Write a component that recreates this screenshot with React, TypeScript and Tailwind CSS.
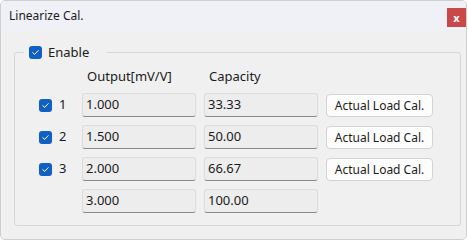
import React from "react";

function Check() {
  return (
    <span className="flex h-[13px] w-[13px] shrink-0 items-center justify-center rounded-[3px] bg-[#0f5fc4]">
      <svg width="9" height="9" viewBox="0 0 9 9" fill="none">
        <path d="M1.8 4.7 L3.6 6.4 L7.2 2.6" stroke="white" strokeWidth="1" strokeLinecap="round" strokeLinejoin="round" />
      </svg>
    </span>
  );
}

function Box({ v }: { v: string }) {
  return (
    <div className="flex h-[24px] w-[114px] items-center rounded-[3px] border border-[#dcdcdc] border-b-[#8a8a8a] bg-[#ededed] pl-[3px] text-[13px] text-[#1b1b1b]">
      {v}
    </div>
  );
}

function Btn() {
  return (
    <div className="ml-[8px] mt-[1px] flex h-[23px] w-[107px] items-center justify-center rounded-[4px] border border-[#d3d3d3] bg-[#fdfdfd] text-[12px] text-[#1b1b1b]">
      Actual Load Cal.
    </div>
  );
}

const rows = [
  { n: "1", o: "1.000", c: "33.33", b: true },
  { n: "2", o: "1.500", c: "50.00", b: true },
  { n: "3", o: "2.000", c: "66.67", b: true },
  { n: "", o: "3.000", c: "100.00", b: false },
];

export default function App() {
  return (
    <div
      className="flex h-[240px] w-[467px] flex-col overflow-hidden rounded-[5px] border border-[#cfcfcf] bg-[#f0f0f0] text-[#1b1b1b]"
      style={{ fontFamily: '"Noto Sans", "Noto Sans CJK JP", sans-serif' }}
    >
      <div className="flex h-[30px] shrink-0 items-start justify-between bg-[#eff1f6] pl-[8px]">
        <span className="mt-[6px] text-[12px] leading-[18px]">Linearize Cal.</span>
        <div className="mt-[7px] flex h-[19px] w-[19px] items-center justify-center bg-[#c94848] text-[11px] font-bold leading-none text-white">
          x
        </div>
      </div>
      <div className="px-[13px] pt-[12px]">
        <fieldset className="w-[447px] rounded-[3px] border border-[#d6d6d6] px-0 pb-[12px]">
          <legend className="ml-[9px] flex items-center pl-[5px] pr-[18px] text-[13px] leading-[18px]">
            <Check />
            <span className="ml-[6px]">Enable</span>
          </legend>
          <div className="pl-[24px]">
            <div className="flex h-[32px] items-center text-[13px]">
              <span className="ml-[48px] w-[122px]">Output[mV/V]</span>
              <span>Capacity</span>
            </div>
            <div className="flex flex-col gap-[8px]">
              {rows.map((r, i) => (
                <div key={i} className="flex items-center">
                  <div className="flex w-[43px] items-center">
                    {r.n && (
                      <>
                        <Check />
                        <span className="ml-[7px] text-[13px]">{r.n}</span>
                      </>
                    )}
                  </div>
                  <Box v={r.o} />
                  <div className="ml-[8px]">
                    <Box v={r.c} />
                  </div>
                  {r.b && <Btn />}
                </div>
              ))}
            </div>
          </div>
        </fieldset>
      </div>
    </div>
  );
}
